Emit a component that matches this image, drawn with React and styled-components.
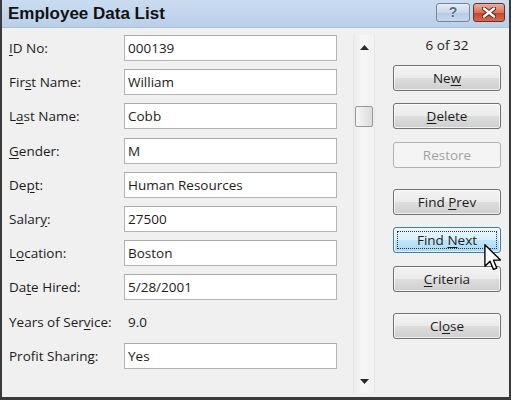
import React from 'react';
import styled, { createGlobalStyle, css } from 'styled-components';

const GlobalStyle = createGlobalStyle`
  html, body {
    margin: 0;
    padding: 0;
    background: #f0f0f0;
  }
  * {
    box-sizing: border-box;
  }
`;

const Window = styled.div`
  position: relative;
  width: 511px;
  height: 400px;
  display: flex;
  flex-direction: column;
  background: #f0f0f0;
  border: 2px solid #3a3a3a;
  border-top: none;
  border-bottom-width: 3px;
  font-family: 'Open Sans', 'Noto Sans', sans-serif;
  font-size: 13.5px;
  color: #1c1c1c;
  overflow: hidden;
`;

const TitleBar = styled.div`
  height: 28px;
  flex: none;
  display: flex;
  align-items: center;
  justify-content: space-between;
  padding: 0 4px 0 6px;
  background: linear-gradient(#cadcf0, #b9d0e9);
  border-bottom: 1px solid #a9c1db;
`;

const Title = styled.div`
  font-family: 'Liberation Sans', Arial, sans-serif;
  font-weight: bold;
  font-size: 17px;
  color: #111;
`;

const Caption = styled.div`
  display: flex;
  gap: 3px;
  margin-top: -3px;
`;

const CaptionButton = styled.div`
  height: 19px;
  width: ${({ wide }) => (wide ? 34 : 32)}px;
  border-radius: 3px;
  display: flex;
  align-items: center;
  justify-content: center;
  ${({ danger }) =>
    danger
      ? css`
          border: 1px solid #6e2c22;
          background: linear-gradient(#eab0a0, #d8725c 50%, #c5442c 52%, #d66a4c);
        `
      : css`
          border: 1px solid #7186a0;
          background: linear-gradient(#e4edf7, #c8d7ea 50%, #b5c8df 52%, #c7d8ec);
        `}
`;

const Help = styled.span`
  font-family: 'Liberation Sans', Arial, sans-serif;
  font-weight: bold;
  font-size: 14px;
  color: #56677d;
  text-shadow: 0 0 2px #fff;
`;

const Body = styled.div`
  flex: 1;
  display: flex;
  padding: 7px 0 4px 6px;
`;

const Form = styled.div`
  display: grid;
  grid-template-columns: 116px 213px;
  grid-auto-rows: 26px;
  row-gap: 8.2px;
  align-items: center;
  align-content: start;
`;

const Label = styled.div`
  white-space: nowrap;
  padding-left: 1px;
`;

const Field = styled.div`
  height: 26px;
  border: 1px solid #b4b4b4;
  border-top-color: #a9a9a9;
  background: #fff;
  padding-left: 3px;
  display: flex;
  align-items: center;
`;

const Value = styled.div`
  padding-left: 4px;
`;

const Scrollbar = styled.div`
  width: 22px;
  margin: 0 18px 0 16px;
  display: flex;
  flex-direction: column;
  border-left: 1px solid #e6e6e6;
  border-right: 1px solid #e6e6e6;
  background: linear-gradient(to right, #ececec, #f6f6f6 40%, #f2f2f2);
`;

const ArrowBox = styled.div`
  height: 24px;
  flex: none;
  display: flex;
  align-items: center;
  justify-content: center;
`;

const Track = styled.div`
  flex: 1;
  padding: 0 1px;
`;

const Thumb = styled.div`
  height: 21px;
  border: 1px solid #979797;
  border-radius: 2px;
  background: linear-gradient(to right, #f6f6f6, #e9e9e9 50%, #dcdcdc);
`;

const Panel = styled.div`
  width: 108px;
  display: flex;
  flex-direction: column;
  gap: 12.5px;
`;

const Counter = styled.div`
  height: 19px;
  line-height: 19px;
  text-align: center;
  margin-top: 1px;
  margin-bottom: -3px;
`;

const Button = styled.div`
  position: relative;
  height: 26px;
  border-radius: 3px;
  display: flex;
  align-items: center;
  justify-content: center;
  margin-top: ${({ spaced }) => (spaced ? 8.5 : 0)}px;
  border: 1px solid #707070;
  background: linear-gradient(#f3f3f3, #ebebeb 50%, #dddddd 52%, #cfcfcf);
  box-shadow: inset 0 0 0 1px rgba(255, 255, 255, 0.7);
  ${({ disabled }) =>
    disabled &&
    css`
      border-color: #adb2b5;
      background: #f4f4f4;
      color: #a3a3a3;
      box-shadow: none;
    `}
  ${({ focused }) =>
    focused &&
    css`
      border-color: #3c7fb1;
      background: linear-gradient(#eaf6fd, #d9f0fc 50%, #bee6fd 52%, #a7d9f5);
      &::after {
        content: '';
        position: absolute;
        inset: 3px;
        border: 1px dotted #333;
      }
    `}
`;

const Key = styled.span`
  text-decoration: underline;
  text-underline-offset: 2px;
`;

const Cursor = styled.svg`
  position: absolute;
  left: 482px;
  top: 244px;
`;

const fields = [
  [<><Key>I</Key>D No:</>, '000139'],
  [<>Fir<Key>s</Key>t Name:</>, 'William'],
  [<>L<Key>a</Key>st Name:</>, 'Cobb'],
  [<><Key>G</Key>ender:</>, 'M'],
  [<>De<Key>p</Key>t:</>, 'Human Resources'],
  [<>Salar<Key>y</Key>:</>, '27500'],
  [<>L<Key>o</Key>cation:</>, 'Boston'],
  [<>Da<Key>t</Key>e Hired:</>, '5/28/2001'],
  [<>Years of Ser<Key>v</Key>ice:</>, '9.0', true],
  [<>Profit Sharing:</>, 'Yes'],
];

const Arrow = ({ down }) => (
  <svg width="9" height="5" viewBox="0 0 9 5">
    <path d={down ? 'M0 0 L9 0 L4.5 5 Z' : 'M0 5 L9 5 L4.5 0 Z'} fill="#2a2a2a" />
  </svg>
);

export default function App() {
  return (
    <>
      <GlobalStyle />
      <Window>
        <TitleBar>
          <Title>Employee Data List</Title>
          <Caption>
            <CaptionButton wide>
              <Help>?</Help>
            </CaptionButton>
            <CaptionButton danger>
              <svg width="14" height="11" viewBox="0 0 14 11">
                <path d="M2 1.5 L12 9.5 M12 1.5 L2 9.5" stroke="#5c1c12" strokeWidth="4.2" strokeLinecap="round" />
                <path d="M2 1.5 L12 9.5 M12 1.5 L2 9.5" stroke="#fff" strokeWidth="2.4" strokeLinecap="round" />
              </svg>
            </CaptionButton>
          </Caption>
        </TitleBar>
        <Body>
          <Form>
            {fields.map(([label, value, readOnly], i) => (
              <React.Fragment key={i}>
                <Label>{label}</Label>
                {readOnly ? <Value>{value}</Value> : <Field>{value}</Field>}
              </React.Fragment>
            ))}
          </Form>
          <Scrollbar>
            <ArrowBox>
              <Arrow />
            </ArrowBox>
            <Track>
              <Thumb style={{ marginTop: 47 }} />
            </Track>
            <ArrowBox>
              <Arrow down />
            </ArrowBox>
          </Scrollbar>
          <Panel>
            <Counter>6 of 32</Counter>
            <Button><span>Ne<Key>w</Key></span></Button>
            <Button><span><Key>D</Key>elete</span></Button>
            <Button disabled><span>Restore</span></Button>
            <Button spaced><span>Find <Key>P</Key>rev</span></Button>
            <Button focused><span>Find <Key>N</Key>ext</span></Button>
            <Button><span><Key>C</Key>riteria</span></Button>
            <Button spaced><span>Cl<Key>o</Key>se</span></Button>
          </Panel>
        </Body>
        <Cursor width="18" height="27" viewBox="0 0 13 20">
          <path d="M0.5 0.5 L0.5 16.5 L4.3 12.8 L6.8 18.8 L9.3 17.8 L6.8 11.9 L12 11.9 Z" fill="#fff" stroke="#000" strokeWidth="1" strokeLinejoin="round" />
        </Cursor>
      </Window>
    </>
  );
}
